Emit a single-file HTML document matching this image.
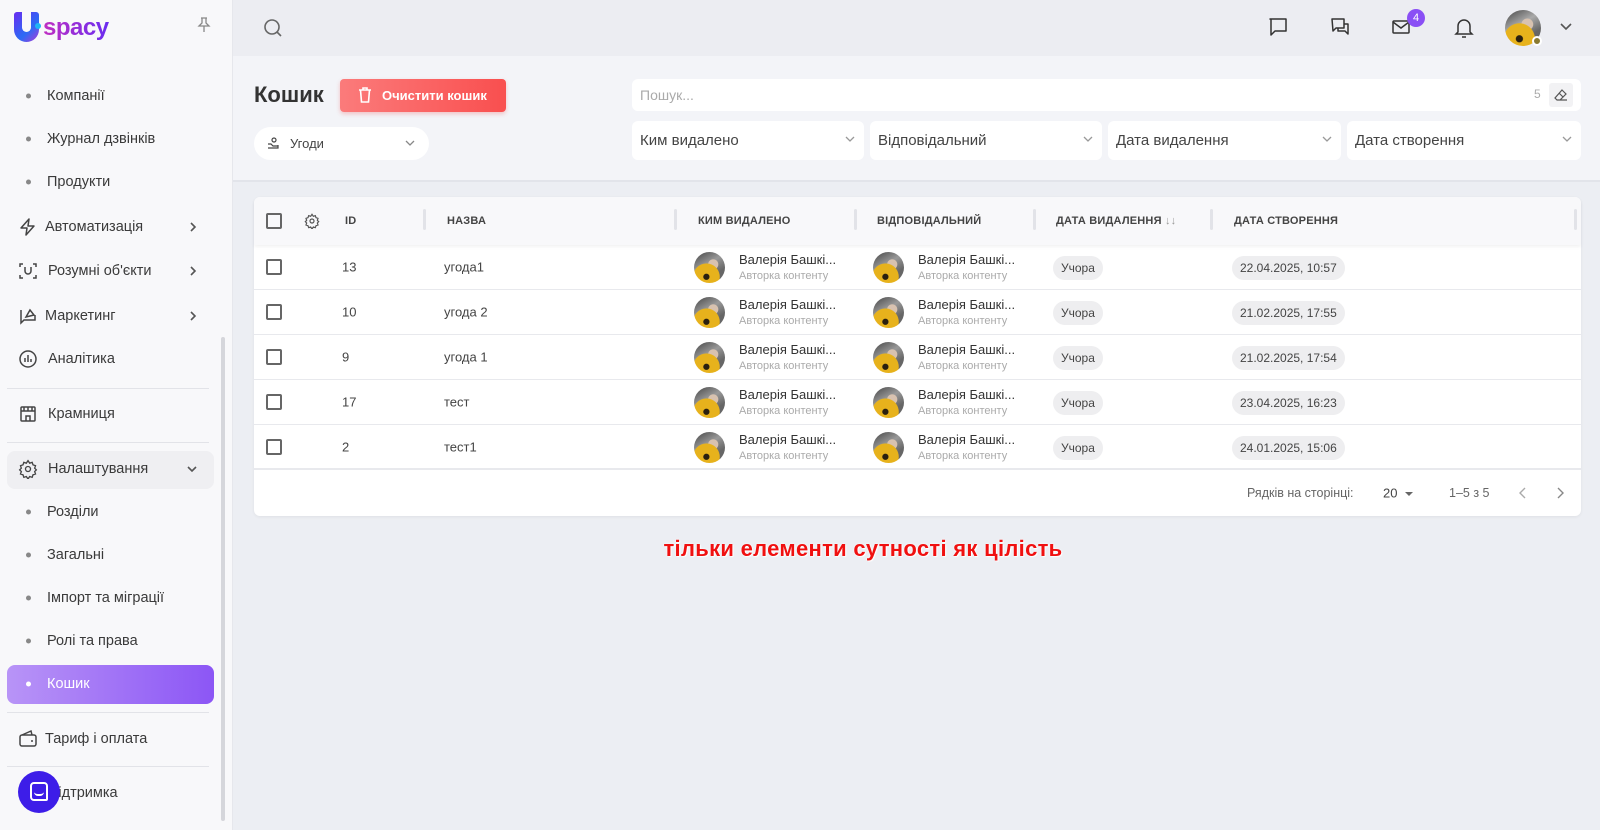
<!DOCTYPE html>
<html><head><meta charset="utf-8"><style>
*{box-sizing:border-box;margin:0;padding:0}
body{width:1600px;height:830px;overflow:hidden;background:#eceef3;font-family:"Liberation Sans","Noto Sans CJK SC",sans-serif;color:#333;position:relative}
.abs{position:absolute}
.sb{left:0;top:0;width:233px;height:830px;background:#f8f8fa;border-right:1px solid #e6e7ec}
.si{position:absolute;left:47px;font-size:14.5px;color:#3a3a3a;transform:translateY(-50%);white-space:nowrap}
.dot{position:absolute;left:26px;width:5px;height:5px;border-radius:50%;background:#888;transform:translateY(-50%)}
.ic{position:absolute;left:18px;transform:translateY(-50%)}
.chev{position:absolute;left:188px;transform:translateY(-50%)}
.hl{position:absolute;left:7px;width:202px;height:1px;background:#e2e3e8}
.top{left:233px;top:0;width:1367px;height:56px;background:#ecedf2}
.hdr{left:233px;top:56px;width:1367px;height:126px;background:#f3f4f8;border-bottom:2px solid #e2e4ea}
.card{left:254px;top:197px;width:1327px;height:319px;background:#fff;border-radius:6px;box-shadow:0 1px 3px rgba(0,0,0,.06)}
.th{position:absolute;top:0;left:0;right:0;height:48px;background:#f8f8fa;border-radius:6px 6px 0 0;box-shadow:0 2px 3px rgba(0,0,0,.05)}
.thl{position:absolute;top:24px;transform:translateY(-50%);font-size:11px;font-weight:bold;color:#444;letter-spacing:.2px}
.sep{position:absolute;top:12px;width:3px;height:21px;background:#e2e3e8;border-radius:2px}
.cb{position:absolute;width:16px;height:16px;border:2px solid #666;border-radius:2px}
.row{position:absolute;left:0;right:0;height:45px;border-bottom:1px solid #e8e9ed}
.cell{position:absolute;top:22px;transform:translateY(-50%);font-size:13px;color:#444;white-space:nowrap}
.av{position:absolute;top:7px;width:31px;height:31px;border-radius:50%;background:radial-gradient(circle at 40% 80%,#2a2010 0 9%,#e7b21c 11% 42%,transparent 44%),radial-gradient(circle at 62% 40%,#d8c2b0 0 18%,transparent 20%),linear-gradient(150deg,#444 0%,#999 40%,#666 70%)}
.nm{position:absolute;top:7px;font-size:13px;color:#333}
.rl{position:absolute;top:25px;font-size:11px;color:#aaa}
.chip{position:absolute;top:11px;height:24px;line-height:24px;padding:0 8px;border-radius:12px;background:#eeeef0;font-size:12px;color:#444}
.flt{position:absolute;top:121px;height:39px;background:#fff;border-radius:6px;font-size:15px;color:#444;padding:11px 8px}
.flt svg{position:absolute;right:9px;top:15px}
</style></head><body>

<div class="abs sb">
  <div class="abs" style="left:14px;top:12px;width:25px;height:30px;border-radius:3px 3px 13px 13px;background:linear-gradient(135deg,#6a2cf0,#2b6bf5 60%,#b03ad8)"></div>
  <div class="abs" style="left:22px;top:12px;width:9px;height:20px;background:#f8f8fa;border-radius:0 0 5px 5px"></div>
  <div class="abs" style="left:35px;top:23px;width:6px;height:6px;border-radius:50%;background:#1fb5f5"></div>
  <div class="abs" style="left:43px;top:14px;font-size:24px;font-weight:bold;color:#a031d6;letter-spacing:-.5px;background:linear-gradient(90deg,#c02fc2,#6a2cf0);-webkit-background-clip:text;-webkit-text-fill-color:transparent">spacy</div>
  <svg class="abs" style="left:197px;top:17px" width="14" height="16" viewBox="0 0 14 16" fill="none" stroke="#888" stroke-width="1.3"><path d="M4 1h6M5 1v5L2 9h10L9 6V1M7 9v6"/></svg>

  <div class="dot" style="top:96px"></div><div class="si" style="top:96px">Компанії</div>
  <div class="dot" style="top:139px"></div><div class="si" style="top:139px">Журнал дзвінків</div>
  <div class="dot" style="top:182px"></div><div class="si" style="top:182px">Продукти</div>

  <svg class="ic" style="top:227px" width="20" height="20" viewBox="0 0 20 20" fill="none" stroke="#444" stroke-width="1.5" stroke-linejoin="round"><path d="M11 2L3 11h6l-1 7 8-9h-6z"/></svg>
  <div class="si" style="top:227px;left:45px">Автоматизація</div>
  <svg class="chev" style="top:227px" width="10" height="12" viewBox="0 0 10 12" fill="none" stroke="#555" stroke-width="1.6"><path d="M3 2l4 4-4 4"/></svg>

  <svg class="ic" style="top:271px" width="20" height="20" viewBox="0 0 20 20" fill="none" stroke="#444" stroke-width="1.5"><path d="M2 6V3h3M15 3h3v3M18 14v3h-3M5 17H2v-3M7 6v4a3 3 0 006 0V6"/></svg>
  <div class="si" style="top:271px;left:48px">Розумні об'єкти</div>
  <svg class="chev" style="top:271px" width="10" height="12" viewBox="0 0 10 12" fill="none" stroke="#555" stroke-width="1.6"><path d="M3 2l4 4-4 4"/></svg>

  <svg class="ic" style="top:316px" width="20" height="20" viewBox="0 0 20 20" fill="none" stroke="#444" stroke-width="1.5"><path d="M3 4v13l3-3h11V9M8 11l4-7 4 5z"/></svg>
  <div class="si" style="top:316px;left:45px">Маркетинг</div>
  <svg class="chev" style="top:316px" width="10" height="12" viewBox="0 0 10 12" fill="none" stroke="#555" stroke-width="1.6"><path d="M3 2l4 4-4 4"/></svg>

  <svg class="ic" style="top:359px" width="20" height="20" viewBox="0 0 20 20" fill="none" stroke="#444" stroke-width="1.5"><circle cx="10" cy="10" r="8"/><path d="M7 13V9M10 13V6M13 13v-3"/></svg>
  <div class="si" style="top:359px;left:48px">Аналітика</div>
  <div class="hl" style="top:388px"></div>

  <svg class="ic" style="top:414px" width="20" height="20" viewBox="0 0 20 20" fill="none" stroke="#444" stroke-width="1.5"><rect x="3" y="3" width="14" height="14" rx="1"/><path d="M3 7h14M8 17v-5h4v5M6 3v4M10 3v4M14 3v4"/></svg>
  <div class="si" style="top:414px;left:48px">Крамниця</div>
  <div class="hl" style="top:442px"></div>

  <div class="abs" style="left:7px;top:451px;width:207px;height:38px;border-radius:8px;background:#efeff2"></div>
  <svg class="ic" style="top:469px" width="20" height="20" viewBox="0 0 24 24" fill="none" stroke="#444" stroke-width="1.6"><circle cx="12" cy="12" r="3"/><path d="M12 2l2 3 3-1 1 3 3 1-1 3 2 2-2 2 1 3-3 1-1 3-3-1-2 3-2-3-3 1-1-3-3-1 1-3-2-2 2-2-1-3 3-1 1-3 3 1z"/></svg>
  <div class="si" style="top:469px;left:48px">Налаштування</div>
  <svg class="chev" style="top:469px;left:186px" width="12" height="10" viewBox="0 0 12 10" fill="none" stroke="#555" stroke-width="1.6"><path d="M2 3l4 4 4-4"/></svg>

  <div class="dot" style="top:512px"></div><div class="si" style="top:512px">Розділи</div>
  <div class="dot" style="top:555px"></div><div class="si" style="top:555px">Загальні</div>
  <div class="dot" style="top:598px"></div><div class="si" style="top:598px">Імпорт та міграції</div>
  <div class="dot" style="top:641px"></div><div class="si" style="top:641px">Ролі та права</div>

  <div class="abs" style="left:7px;top:665px;width:207px;height:39px;border-radius:8px;background:linear-gradient(90deg,#b894f7,#8c56f5)"></div>
  <div class="dot" style="top:684px;background:#fff"></div><div class="si" style="top:684px;color:#fff">Кошик</div>
  <div class="hl" style="top:712px"></div>

  <svg class="ic" style="top:739px" width="20" height="20" viewBox="0 0 20 20" fill="none" stroke="#444" stroke-width="1.5"><rect x="2" y="6" width="16" height="11" rx="2"/><path d="M4 6l9-4 1 4M13 12h2"/></svg>
  <div class="si" style="top:739px;left:45px">Тариф і оплата</div>
  <div class="hl" style="top:766px"></div>
  <div class="si" style="top:793px;left:48px">Підтримка</div>
  <div class="abs" style="left:18px;top:771px;width:42px;height:42px;border-radius:50%;background:#3d1de8"></div>
  <div class="abs" style="left:30px;top:782px;width:18px;height:19px;border-radius:4px;border:2px solid #fff;border-bottom-right-radius:2px"></div>
  <div class="abs" style="left:34px;top:792px;width:10px;height:4px;border-bottom:2px solid #fff;border-radius:0 0 5px 5px"></div>

  <div class="abs" style="left:221px;top:337px;width:4px;height:484px;background:#d5d6db;border-radius:2px"></div>
</div>

<div class="abs top">
  <svg class="abs" style="left:30px;top:18px" width="20" height="20" viewBox="0 0 20 20" fill="none" stroke="#666" stroke-width="1.6"><circle cx="9" cy="9" r="7"/><path d="M14 14l4 4"/></svg>
  <svg class="abs" style="left:1035px;top:17px" width="20" height="20" viewBox="0 0 20 20" fill="none" stroke="#333" stroke-width="1.5" stroke-linejoin="round"><path d="M2 2h16v12H7l-4 4V2z"/></svg>
  <svg class="abs" style="left:1097px;top:17px" width="20" height="20" viewBox="0 0 20 20" fill="none" stroke="#333" stroke-width="1.5" stroke-linejoin="round"><path d="M2 2h12v9H6l-3 3zM8 11v3h7l3 3V7h-4"/></svg>
  <svg class="abs" style="left:1158px;top:18px" width="20" height="18" viewBox="0 0 20 18" fill="none" stroke="#333" stroke-width="1.5"><rect x="2" y="3" width="16" height="12" rx="1"/><path d="M2 4l8 6 8-6"/></svg>
  <div class="abs" style="left:1174px;top:9px;width:18px;height:18px;border-radius:50%;background:#8a4ff5;color:#fff;font-size:11px;text-align:center;line-height:18px">4</div>
  <svg class="abs" style="left:1221px;top:17px" width="20" height="22" viewBox="0 0 20 22" fill="none" stroke="#333" stroke-width="1.5"><path d="M4 15V9a6 6 0 0112 0v6l2 2H2zM8 20h4"/></svg>
  <div class="abs" style="left:1272px;top:10px;width:36px;height:36px;border-radius:50%;background:radial-gradient(circle at 40% 80%,#2a2010 0 9%,#e7b21c 11% 42%,transparent 44%),radial-gradient(circle at 62% 40%,#d8c2b0 0 18%,transparent 20%),linear-gradient(150deg,#444,#aaa 40%,#666 70%)"></div>
  <div class="abs" style="left:1299px;top:36px;width:10px;height:10px;border-radius:50%;background:#8a7a30;border:2px solid #fff"></div>
  <svg class="abs" style="left:1327px;top:23px" width="12" height="8" viewBox="0 0 12 8" fill="none" stroke="#555" stroke-width="1.6"><path d="M1 1l5 5 5-5"/></svg>
</div>

<div class="abs hdr"></div>
<div class="abs" style="left:254px;top:82px;font-size:22px;font-weight:bold;color:#333">Кошик</div>
<div class="abs" style="left:340px;top:79px;width:166px;height:33px;border-radius:4px;background:linear-gradient(90deg,#fb7b7b,#f94f4f);box-shadow:0 2px 4px rgba(240,80,80,.3);color:#fff;font-size:13px;font-weight:bold;padding:9px 0 0 42px">Очистити кошик</div>
<svg class="abs" style="left:358px;top:87px" width="14" height="16" viewBox="0 0 14 16" fill="none" stroke="#fff" stroke-width="1.6"><path d="M1 3h12M5 3V1h4v2M2.5 3l1 12h7l1-12"/></svg>

<div class="abs" style="left:254px;top:127px;width:175px;height:33px;border-radius:17px;background:#fff;font-size:13px;color:#444;padding:9px 0 0 36px">Угоди</div>
<svg class="abs" style="left:267px;top:137px" width="13" height="13" viewBox="0 0 13 13" fill="none" stroke="#444" stroke-width="1.2"><circle cx="7" cy="3" r="2"/><path d="M1 7h3l2 2h5M1 11h10V8"/></svg>
<svg class="abs" style="left:405px;top:140px" width="10" height="7" viewBox="0 0 10 7" fill="none" stroke="#888" stroke-width="1.3"><path d="M1 1l4 4 4-4"/></svg>

<div class="abs" style="left:632px;top:79px;width:949px;height:32px;background:#fff;border-radius:6px;font-size:14px;color:#aaa;padding:8px 8px">Пошук...</div>
<div class="abs" style="left:1534px;top:87px;font-size:12px;color:#aaa">5</div>
<div class="abs" style="left:1549px;top:83px;width:24px;height:24px;border-radius:3px;background:#f2f2f4"></div>
<svg class="abs" style="left:1554px;top:88px" width="14" height="14" viewBox="0 0 14 14" fill="none" stroke="#555" stroke-width="1.2"><path d="M8 2l4 4-6 6H3l-2-2zM5 5l4 4M6 12h7"/></svg>

<div class="flt" style="left:632px;width:232px">Ким видалено<svg width="10" height="7" viewBox="0 0 10 7" fill="none" stroke="#999" stroke-width="1.3"><path d="M1 1l4 4 4-4"/></svg></div>
<div class="flt" style="left:870px;width:232px">Відповідальний<svg width="10" height="7" viewBox="0 0 10 7" fill="none" stroke="#999" stroke-width="1.3"><path d="M1 1l4 4 4-4"/></svg></div>
<div class="flt" style="left:1108px;width:233px">Дата видалення<svg width="10" height="7" viewBox="0 0 10 7" fill="none" stroke="#999" stroke-width="1.3"><path d="M1 1l4 4 4-4"/></svg></div>
<div class="flt" style="left:1347px;width:234px">Дата створення<svg width="10" height="7" viewBox="0 0 10 7" fill="none" stroke="#999" stroke-width="1.3"><path d="M1 1l4 4 4-4"/></svg></div>

<div class="abs card">
  <div class="th">
    <div class="cb" style="left:12px;top:16px"></div>
    <svg class="abs" style="left:50px;top:16px" width="16" height="16" viewBox="0 0 24 24" fill="none" stroke="#555" stroke-width="1.8"><circle cx="12" cy="12" r="3"/><path d="M12 2l2 3 3-1 1 3 3 1-1 3 2 2-2 2 1 3-3 1-1 3-3-1-2 3-2-3-3 1-1-3-3-1 1-3-2-2 2-2-1-3 3-1 1-3 3 1z"/></svg>
    <div class="thl" style="left:91px">ID</div>
    <div class="sep" style="left:169px"></div>
    <div class="thl" style="left:193px">НАЗВА</div>
    <div class="sep" style="left:420px"></div>
    <div class="thl" style="left:444px">КИМ ВИДАЛЕНО</div>
    <div class="sep" style="left:600px"></div>
    <div class="thl" style="left:623px">ВІДПОВІДАЛЬНИЙ</div>
    <div class="sep" style="left:779px"></div>
    <div class="thl" style="left:802px">ДАТА ВИДАЛЕННЯ <span style="color:#999;font-weight:normal">↓↓</span></div>
    <div class="sep" style="left:956px"></div>
    <div class="thl" style="left:980px">ДАТА СТВОРЕННЯ</div>
    <div class="sep" style="left:1320px"></div>
  </div>

  <div class="row" style="top:48px"><div class="cb" style="left:12px;top:14px"></div><div class="cell" style="left:88px">13</div><div class="cell" style="left:190px">угода1</div><div class="av" style="left:440px"></div><div class="nm" style="left:485px">Валерія Башкі...</div><div class="rl" style="left:485px">Авторка контенту</div><div class="av" style="left:619px"></div><div class="nm" style="left:664px">Валерія Башкі...</div><div class="rl" style="left:664px">Авторка контенту</div><div class="chip" style="left:799px">Учора</div><div class="chip" style="left:978px">22.04.2025, 10:57</div></div>
  <div class="row" style="top:93px"><div class="cb" style="left:12px;top:14px"></div><div class="cell" style="left:88px">10</div><div class="cell" style="left:190px">угода 2</div><div class="av" style="left:440px"></div><div class="nm" style="left:485px">Валерія Башкі...</div><div class="rl" style="left:485px">Авторка контенту</div><div class="av" style="left:619px"></div><div class="nm" style="left:664px">Валерія Башкі...</div><div class="rl" style="left:664px">Авторка контенту</div><div class="chip" style="left:799px">Учора</div><div class="chip" style="left:978px">21.02.2025, 17:55</div></div>
  <div class="row" style="top:138px"><div class="cb" style="left:12px;top:14px"></div><div class="cell" style="left:88px">9</div><div class="cell" style="left:190px">угода 1</div><div class="av" style="left:440px"></div><div class="nm" style="left:485px">Валерія Башкі...</div><div class="rl" style="left:485px">Авторка контенту</div><div class="av" style="left:619px"></div><div class="nm" style="left:664px">Валерія Башкі...</div><div class="rl" style="left:664px">Авторка контенту</div><div class="chip" style="left:799px">Учора</div><div class="chip" style="left:978px">21.02.2025, 17:54</div></div>
  <div class="row" style="top:183px"><div class="cb" style="left:12px;top:14px"></div><div class="cell" style="left:88px">17</div><div class="cell" style="left:190px">тест</div><div class="av" style="left:440px"></div><div class="nm" style="left:485px">Валерія Башкі...</div><div class="rl" style="left:485px">Авторка контенту</div><div class="av" style="left:619px"></div><div class="nm" style="left:664px">Валерія Башкі...</div><div class="rl" style="left:664px">Авторка контенту</div><div class="chip" style="left:799px">Учора</div><div class="chip" style="left:978px">23.04.2025, 16:23</div></div>
  <div class="row" style="top:228px;border-bottom:2px solid #e8e9ed"><div class="cb" style="left:12px;top:14px"></div><div class="cell" style="left:88px">2</div><div class="cell" style="left:190px">тест1</div><div class="av" style="left:440px"></div><div class="nm" style="left:485px">Валерія Башкі...</div><div class="rl" style="left:485px">Авторка контенту</div><div class="av" style="left:619px"></div><div class="nm" style="left:664px">Валерія Башкі...</div><div class="rl" style="left:664px">Авторка контенту</div><div class="chip" style="left:799px">Учора</div><div class="chip" style="left:978px">24.01.2025, 15:06</div></div>

  <div class="cell" style="top:296px;left:993px;font-size:12.5px;color:#666">Рядків на сторінці:</div>
  <div class="cell" style="top:296px;left:1129px;font-size:13px;color:#444">20</div>
  <div class="abs" style="left:1151px;top:295px;width:0;height:0;border-left:4px solid transparent;border-right:4px solid transparent;border-top:4px solid #666"></div>
  <div class="cell" style="top:296px;left:1195px;font-size:12.5px;color:#666">1–5 з 5</div>
  <svg class="abs" style="left:1265px;top:290px" width="8" height="12" viewBox="0 0 8 12" fill="none" stroke="#aaa" stroke-width="1.4"><path d="M6 1L1 6l5 5"/></svg>
  <svg class="abs" style="left:1302px;top:290px" width="8" height="12" viewBox="0 0 8 12" fill="none" stroke="#888" stroke-width="1.4"><path d="M2 1l5 5-5 5"/></svg>
</div>

<div class="abs" style="left:613px;top:536px;width:500px;text-align:center;font-size:22px;font-weight:bold;color:#f01010;letter-spacing:.3px;text-shadow:0 0 2px #fff,1px 1px 1px #fff">тільки елементи сутності як цілість</div>
</body></html>
